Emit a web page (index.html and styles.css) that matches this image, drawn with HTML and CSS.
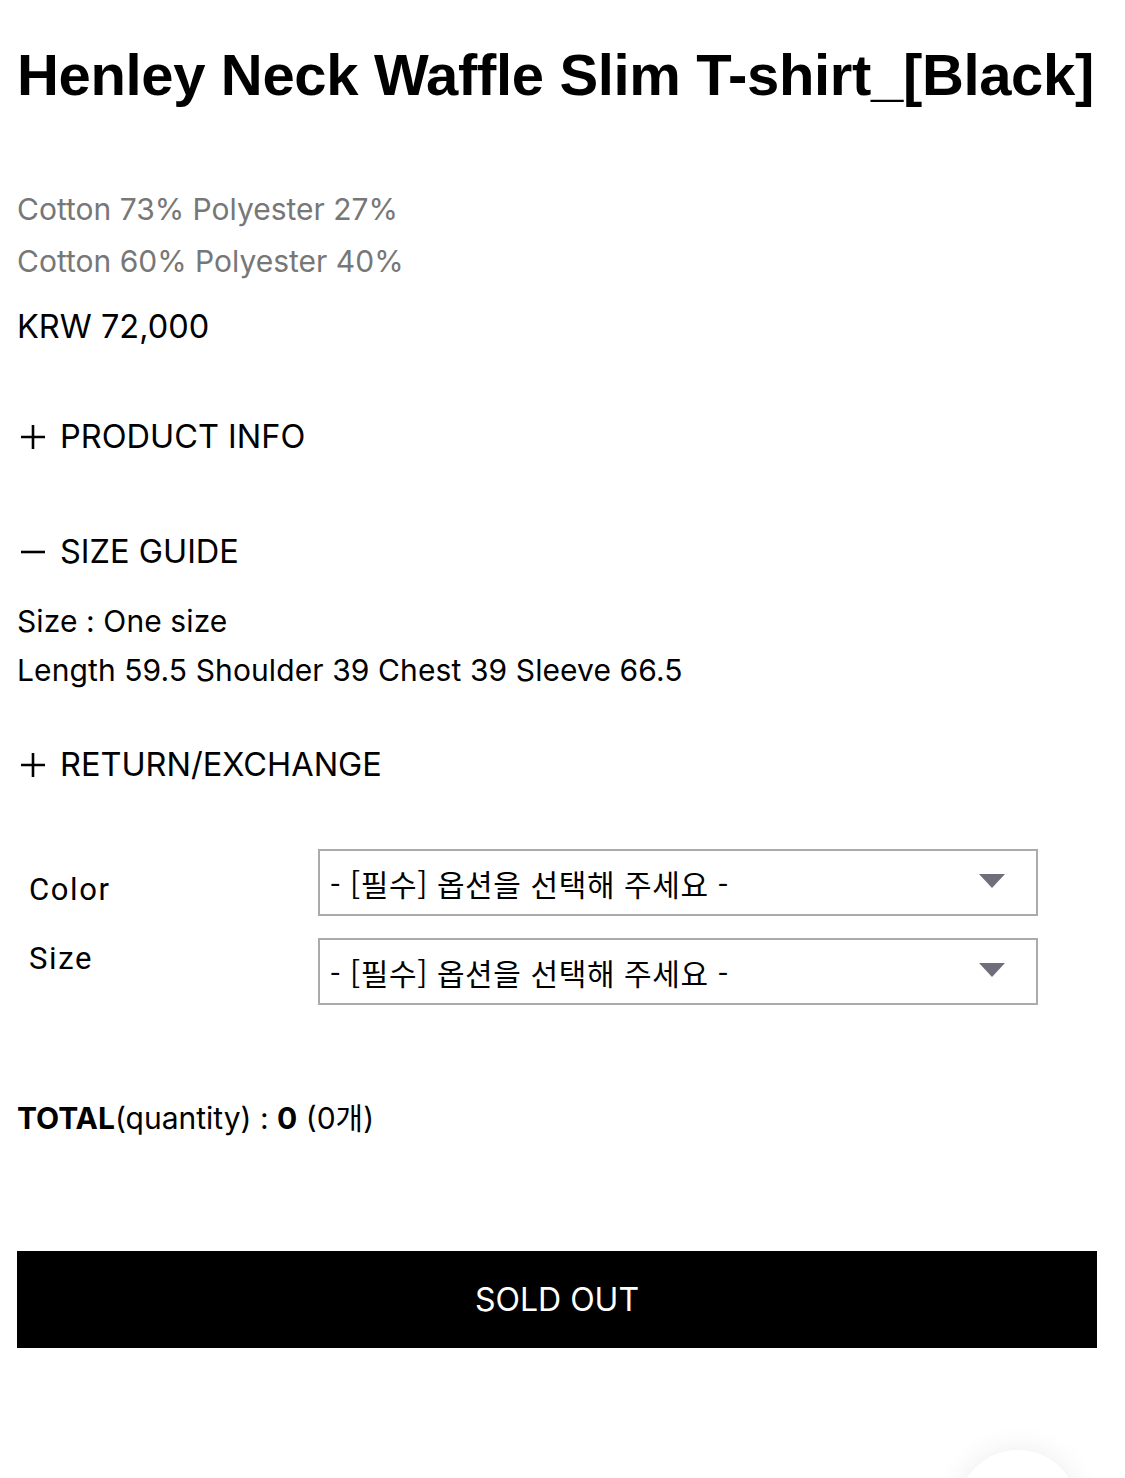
FILE: index.html
```html
<!DOCTYPE html>
<html lang="ko">
<head>
    <meta charset="UTF-8">
    <meta name="viewport" content="width=device-width, initial-scale=1.0">
    <title>Henley Neck Waffle Slim T-shirt_[Black]</title>
    <link rel="stylesheet" href="styles.css">
</head>
<body>
    <div class="product">
        <h1 class="title">Henley Neck Waffle Slim T-shirt_[Black]</h1>

        <div class="fabric">
            <p>Cotton 73% Polyester 27%</p>
            <p>Cotton 60% Polyester 40%</p>
        </div>
        <p class="price">KRW 72,000</p>

        <div class="toggle toggle-first">
            <svg class="toggle-icon" viewBox="0 0 26 26"><path d="M1 13H25M13 1V25" /></svg>
            <span>PRODUCT INFO</span>
        </div>

        <div class="toggle toggle-open">
            <svg class="toggle-icon" viewBox="0 0 26 26"><path d="M1 13H25" /></svg>
            <span>SIZE GUIDE</span>
        </div>
        <div class="size-guide">
            <p>Size : One size</p>
            <p>Length 59.5 Shoulder 39 Chest 39 Sleeve 66.5</p>
        </div>

        <div class="toggle toggle-return">
            <svg class="toggle-icon" viewBox="0 0 26 26"><path d="M1 13H25M13 1V25" /></svg>
            <span>RETURN/EXCHANGE</span>
        </div>

        <div class="options">
            <div class="opt-labels">
                <span>Color</span>
                <span>Size</span>
            </div>
            <div class="opt-selects">
                <div class="select">
                    <span>- [필수] 옵션을 선택해 주세요 -</span>
                    <svg class="arrow" viewBox="0 0 26 14"><path d="M0 0H26L13 14Z" /></svg>
                </div>
                <div class="select">
                    <span>- [필수] 옵션을 선택해 주세요 -</span>
                    <svg class="arrow" viewBox="0 0 26 14"><path d="M0 0H26L13 14Z" /></svg>
                </div>
            </div>
        </div>

        <p class="total"><strong>TOTAL</strong>(quantity) : <strong>0</strong> (0개)</p>

        <button class="sold-out">SOLD OUT</button>
    </div>

    <div class="float-btn"></div>
</body>
</html>
```

FILE: styles.css
```css
body {
    margin: 0;
    background: #fff;
    color: #000;
    font-family: Inter, "Noto Sans CJK KR", sans-serif;
    overflow: hidden;
}

p {
    margin: 0;
}

.product {
    width: 1080px;
    padding: 0 0 0 17px;
}

.title {
    margin: 40px 0 0;
    font-family: "Liberation Sans", Arial, sans-serif;
    font-size: 58px;
    font-weight: 700;
    line-height: 70px;
    letter-spacing: -0.35px;
    white-space: nowrap;
}

.fabric {
    margin-top: 73px;
    color: #777;
    font-size: 30px;
    line-height: 52px;
}

.price {
    margin-top: 14px;
    font-size: 32.5px;
    line-height: 52px;
}

.toggle {
    display: flex;
    align-items: center;
    gap: 14px;
    font-size: 32.5px;
    line-height: 52px;
}

.toggle-first {
    margin-top: 58px;
}

.toggle-open {
    margin-top: 63px;
}

.toggle-return {
    margin-top: 44px;
}

.toggle-icon {
    width: 26px;
    height: 26px;
    margin-left: 3px;
    stroke: #000;
    stroke-width: 2.6;
    fill: none;
}

.size-guide {
    margin-top: 19px;
    font-size: 30px;
    line-height: 49px;
    letter-spacing: 0.1px;
}

.options {
    display: flex;
    margin-top: 58px;
}

.opt-labels {
    width: 289px;
    padding: 21px 0 0 12px;
    display: flex;
    flex-direction: column;
    gap: 29px;
    font-family: Roboto, sans-serif;
    font-size: 31px;
    line-height: 40px;
    letter-spacing: 1.6px;
}

.opt-selects {
    display: flex;
    flex-direction: column;
    gap: 22px;
}

.select {
    box-sizing: border-box;
    width: 720px;
    height: 67px;
    border: 2px solid #ababab;
    display: flex;
    align-items: center;
    justify-content: space-between;
    padding: 0 31px 0 10px;
    font-family: "Noto Sans CJK KR", sans-serif;
    font-size: 30px;
    letter-spacing: 0.6px;
}

.arrow {
    width: 26px;
    height: 14px;
    fill: #6f6f7b;
    margin-top: -4px;
}

.total {
    margin-top: 93px;
    font-size: 30px;
    line-height: 40px;
}

.total strong {
    font-weight: 700;
}

.sold-out {
    display: block;
    width: 1080px;
    height: 97px;
    margin-top: 113px;
    border: none;
    background: #000;
    color: #fff;
    font-family: Inter, sans-serif;
    font-size: 32px;
    cursor: pointer;
}

.float-btn {
    position: fixed;
    left: 958px;
    top: 1450px;
    width: 120px;
    height: 120px;
    border-radius: 50%;
    background: #fff;
    box-shadow: 0 0 30px rgba(0, 0, 0, 0.08);
}
```
